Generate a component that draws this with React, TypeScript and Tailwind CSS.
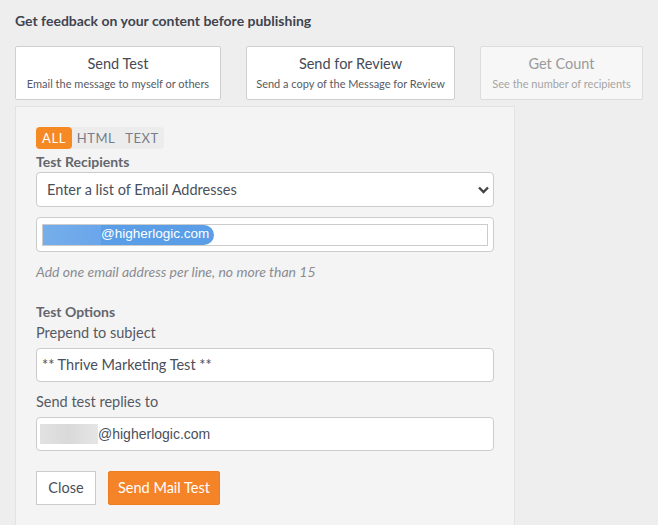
function Card({ title, sub, disabled }: { title: string; sub: string; disabled?: boolean }) {
  return (
    <div
      className={
        "flex h-[54px] flex-col items-center justify-center rounded-[2px] border " +
        (disabled ? "border-[#dddddd] bg-[#f7f7f7]" : "border-[#cfcfcf] bg-white")
      }
    >
      <div className={"text-[14.5px] leading-[18px] " + (disabled ? "text-[#9a9a9a]" : "text-[#454a55]")}>{title}</div>
      <div className={"mt-[4px] text-[11px] leading-[14px] " + (disabled ? "text-[#a5a5a5]" : "text-[#555b66]")}>{sub}</div>
    </div>
  );
}

export default function App() {
  return (
    <div className="h-[525px] w-[658px] overflow-hidden bg-[#eeeeee] font-['Lato',sans-serif]">
      <div className="pl-[15px] pt-[12px]">
        <h1 className="text-[14px] font-bold leading-[18px] text-[#3f4450]">Get feedback on your content before publishing</h1>

        <div className="mt-[16px] flex">
          <div className="w-[206px]">
            <Card title="Send Test" sub="Email the message to myself or others" />
          </div>
          <div className="ml-[25px] w-[209px]">
            <Card title="Send for Review" sub="Send a copy of the Message for Review" />
          </div>
          <div className="ml-[25px] w-[163px]">
            <Card title="Get Count" sub="See the number of recipients" disabled />
          </div>
        </div>

        <div className="mt-[6px] h-[430px] w-[500px] border border-[#e2e2e2] bg-[#f4f4f4] pl-[20px] pt-[20px]">
          <div className="flex h-[22px] w-[128px] rounded-[4px] bg-[#ececec] text-[13px] leading-[22px] tracking-[0.6px]">
            <div className="flex w-[36px] shrink-0 items-center justify-center rounded-[4px] bg-[#f58a24] text-white">ALL</div>
            <div className="flex w-[48px] shrink-0 items-center justify-center text-[#767c8a]">HTML</div>
            <div className="flex w-[44px] shrink-0 items-center justify-center text-[#767c8a]">TEXT</div>
          </div>

          <div className="mt-[5px] text-[14px] font-bold leading-[16px] text-[#63666d]">Test Recipients</div>
          <div className="mt-[2px] flex h-[35px] w-[458px] items-center justify-between rounded-[4px] border border-[#cccccc] bg-white pl-[10px] pr-[4px]">
            <span className="text-[14.5px] text-[#4a4f5a]">Enter a list of Email Addresses</span>
            <svg width="11" height="8" viewBox="0 0 11 8">
              <path d="M1 1.5 L5.5 6 L10 1.5" fill="none" stroke="#444" strokeWidth="2.4" />
            </svg>
          </div>

          <div className="mt-[10px] flex h-[35px] w-[458px] items-center rounded-[4px] border border-[#cccccc] bg-white px-[5px]">
            <div className="flex h-[22px] w-full items-center border border-[#cccccc] bg-white">
              <div className="flex h-[20px] items-center rounded-r-[10px] bg-[#5a9ee8]">
                <div className="h-full w-[58px] bg-gradient-to-r from-[#76aeea] to-[#6aa6ec]" />
                <span className="pr-[5px] font-['Liberation_Sans',sans-serif] text-[13.5px] text-white">@higherlogic.com</span>
              </div>
            </div>
          </div>

          <div className="mt-[12px] text-[14px] italic leading-[16px] text-[#8a8c92]">
            Add one email address per line, no more than 15
          </div>

          <div className="mt-[24px] text-[14px] font-bold leading-[16px] text-[#63666d]">Test Options</div>
          <div className="mt-[4px] text-[14.5px] leading-[18px] text-[#555a64]">Prepend to subject</div>
          <div className="mt-[6px] flex h-[34px] w-[458px] items-center rounded-[4px] border border-[#cccccc] bg-white pl-[5px] text-[14.5px] text-[#4a4f5a]">
            ** Thrive Marketing Test **
          </div>

          <div className="mt-[11px] text-[14.5px] leading-[18px] text-[#555a64]">Send test replies to</div>
          <div className="mt-[6px] flex h-[34px] w-[458px] items-center rounded-[4px] border border-[#cccccc] bg-white pl-[3px] font-['Liberation_Sans',sans-serif] text-[14px] text-[#4a4f5a]">
            <div className="h-[20px] w-[58px] bg-gradient-to-r from-[#e2e2e2] via-[#d9d9d9] to-[#e6e6e6]" />
            @higherlogic.com
          </div>

          <div className="mt-[20px] flex gap-[12px]">
            <button className="h-[34px] w-[60px] border border-[#cccccc] bg-white text-[14.5px] text-[#4a4f5a]">Close</button>
            <button className="h-[34px] w-[112px] rounded-[2px] border border-[#f07e20] bg-[#f58327] text-[14.5px] text-white">
              Send Mail Test
            </button>
          </div>
        </div>
      </div>
    </div>
  );
}
